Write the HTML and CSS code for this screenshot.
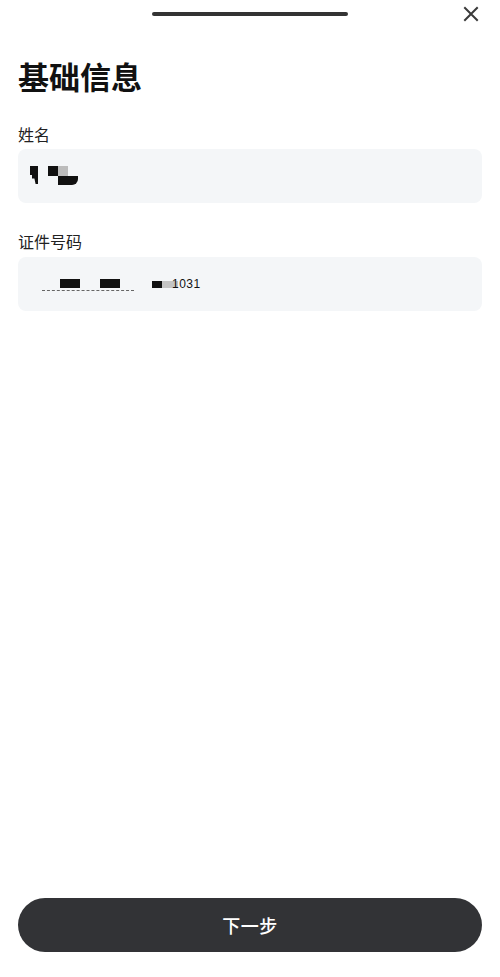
FILE: index.html
```html
<!DOCTYPE html>
<html lang="zh-CN">
<head>
<meta charset="utf-8">
<title>基础信息</title>
<link rel="stylesheet" href="styles.css">
</head>
<body>
<div class="sheet">
  <div class="topbar">
    <div class="handle"></div>
    <button class="close" aria-label="关闭">
      <svg viewBox="0 0 16 16" width="16" height="16"><path d="M2 2L14 14M14 2L2 14" stroke="#3a3a3a" stroke-width="2" stroke-linecap="square" fill="none"/></svg>
    </button>
  </div>
  <h1 class="title">基础信息</h1>
  <div class="field">
    <div class="label">姓名</div>
    <div class="input">
      <span class="mask name1"><i class="b1"></i><i class="b2"></i></span>
      <span class="mask name2"><i class="c1"></i><i class="c2"></i><i class="c3"></i></span>
    </div>
  </div>
  <div class="field">
    <div class="label">证件号码</div>
    <div class="input">
      <span class="idmask">
        <span class="dash"></span>
        <i class="k1"></i><i class="k2"></i>
      </span>
      <span class="idtail"><i class="t1"></i><i class="t2"></i><span class="digits">1031</span></span>
    </div>
  </div>
  <div class="spacer"></div>
  <button class="next">下一步</button>
</div>
</body>
</html>
```
FILE: styles.css
```css
* { box-sizing: border-box; }
html, body { margin: 0; padding: 0; background: #fff; }
body {
  font-family: "Noto Sans CJK SC", "Noto Sans", sans-serif;
  color: #111;
}
.sheet {
  height: 977px;
  display: flex;
  flex-direction: column;
  padding: 0 18px;
}
.topbar {
  position: relative;
  height: 30px;
  display: flex;
  justify-content: center;
}
.handle {
  margin-top: 12px;
  width: 196px;
  height: 4px;
  border-radius: 2px;
  background: #333;
}
.close {
  position: absolute;
  right: 3px;
  top: 6px;
  width: 16px;
  height: 16px;
  padding: 0;
  border: 0;
  background: none;
  display: flex;
}
.title {
  margin: 24px 0 0;
  font-size: 31px;
  line-height: 44px;
  font-weight: 700;
  color: #111;
}
.field + .field { margin-top: 15px; }
.label {
  margin-top: 24px;
  font-size: 16px;
  line-height: 24px;
  color: #222;
}
.field + .field .label { margin-top: 11px; }
.input {
  margin-top: 3px;
  height: 54px;
  border-radius: 8px;
  background: #f4f6f8;
  display: flex;
  align-items: center;
  padding-left: 12px;
}
.field + .field .input { margin-top: 4px; }
.mask { position: relative; display: inline-block; height: 20px; }
.mask i { position: absolute; display: block; background: #111; }
.name1 { width: 10px; }
.name1 .b1 { left: 0; top: 0; width: 8px; height: 9px; }
.name1 .b2 { left: 2px; top: 9px; width: 6px; height: 9px; clip-path: polygon(0 0,100% 0,100% 100%,60% 100%,40% 40%,0 40%); }
.name2 { width: 32px; margin-left: 8px; }
.name2 .c1 { left: 0; top: 0; width: 10px; height: 10px; }
.name2 .c2 { left: 10px; top: 0; width: 10px; height: 10px; background: #bcbcbc; }
.name2 .c3 { left: 10px; top: 10px; width: 20px; height: 9px; border-bottom-right-radius: 6px; }
.idmask { position: relative; display: inline-block; width: 92px; height: 20px; margin-left: 12px; }
.idmask i { position: absolute; top: 5px; height: 9px; width: 20px; display: block; background: #111; }
.idmask .k1 { left: 18px; }
.idmask .k2 { left: 58px; }
.dash { position: absolute; left: 0; right: 0; top: 16px; border-top: 1px dashed #666; }
.idtail { position: relative; display: inline-block; width: 44px; height: 20px; margin-left: 18px; }
.idtail i { position: absolute; top: 7px; height: 7px; display: block; }
.idtail .t1 { left: 0; width: 10px; background: #111; }
.idtail .t2 { left: 10px; width: 16px; background: #c4c4c4; }
.digits {
  position: absolute; left: 20px; top: 0;
  font-family: "Liberation Sans", sans-serif;
  font-size: 12px; line-height: 20px; color: #111; letter-spacing: 0.5px;
}
.spacer { flex: 1; }
.next {
  margin: 0 0 25px;
  height: 54px;
  width: 100%;
  border: 0;
  border-radius: 27px;
  background: #323336;
  color: #fff;
  font-family: "Noto Sans CJK SC", "Noto Sans", sans-serif;
  font-size: 18px;
  font-weight: 500;
  letter-spacing: 0.5px;
}
```
